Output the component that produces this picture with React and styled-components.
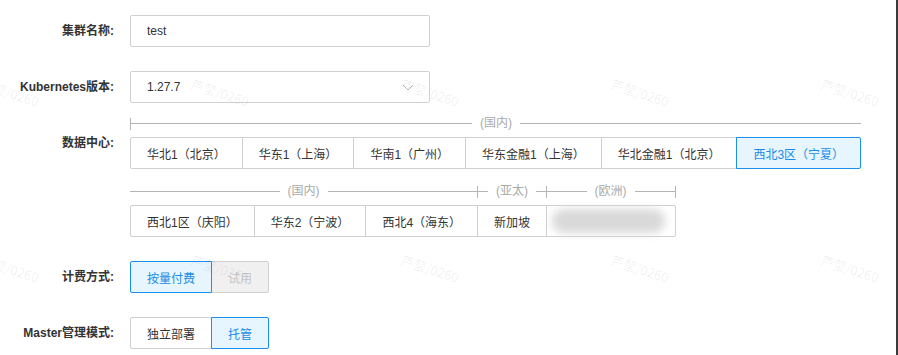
import React from "react";
import styled, { createGlobalStyle } from "styled-components";

const GlobalStyle = createGlobalStyle`
  html, body {
    margin: 0;
    padding: 0;
    background: #fff;
  }
  body {
    font-family: "Liberation Sans", Arial, "Noto Sans CJK SC", sans-serif;
    font-size: 12px;
    color: #333;
  }
`;

const Page = styled.div`
  position: relative;
  width: 898px;
  height: 355px;
  box-sizing: border-box;
  padding-top: 15px;
  border-right: 2px solid #3a3a3a;
  overflow: hidden;
`;

const FormRow = styled.div`
  display: flex;
  align-items: flex-start;
  margin-bottom: ${(p) => p.$gap ?? 24}px;
`;

const Label = styled.div`
  flex: none;
  width: 114px;
  margin-right: 16px;
  padding-top: ${(p) => p.$top || 0}px;
  text-align: right;
  line-height: 32px;
  font-weight: bold;
  color: #333;
  white-space: nowrap;
`;

const TextInput = styled.input`
  width: 300px;
  height: 32px;
  box-sizing: border-box;
  padding: 0 16px;
  border: 1px solid #d0d0d0;
  border-radius: 2px;
  font-family: inherit;
  font-size: 12px;
  color: #333;
  outline: none;
`;

const Select = styled.div`
  display: flex;
  align-items: center;
  justify-content: space-between;
  width: 300px;
  height: 32px;
  box-sizing: border-box;
  padding: 0 15px 0 16px;
  border: 1px solid #d0d0d0;
  border-radius: 2px;
  color: #333;
`;

const Column = styled.div`
  display: flex;
  flex-direction: column;
`;

const Block = styled.div`
  display: flex;
  margin-bottom: ${(p) => p.$gap || 0}px;
`;

const GroupHeader = styled.div`
  display: flex;
  align-items: center;
  height: 13px;
  margin-bottom: 7px;
  color: #aaa;
`;

const Line = styled.span`
  flex: 1;
  height: 1px;
  background: #b4b4b4;
`;

const Tick = styled.span`
  flex: none;
  width: 1px;
  height: 12px;
  background: #b4b4b4;
`;

const HeaderText = styled.span`
  padding: 0 8px;
  line-height: 13px;
  white-space: nowrap;
`;

const SegRow = styled.div`
  display: flex;
`;

const Seg = styled.button`
  position: relative;
  height: 32px;
  padding: ${(p) => (p.$tight ? "0 10px 0 5px" : "0 16px")};
  border: 1px solid #d0d0d0;
  background: ${(p) => (p.$active ? "#e6f5fe" : p.disabled ? "#f0f0f0" : "#fff")};
  border-color: ${(p) => (p.$active ? "#1a90ec" : "#d0d0d0")};
  color: ${(p) => (p.$active ? "#1a8ce6" : p.disabled ? "#c6c6c6" : "#333")};
  z-index: ${(p) => (p.$active ? 1 : 0)};
  font-family: inherit;
  font-size: 12px;
  white-space: nowrap;
  border-radius: 0;
  cursor: ${(p) => (p.disabled ? "not-allowed" : "pointer")};

  & + & {
    margin-left: -1px;
  }
`;

const Group = styled.div`
  display: flex;
  flex-direction: column;

  & + & {
    margin-left: -1px;
  }
  &:first-child ${Seg}:first-child {
    border-radius: 2px 0 0 2px;
  }
  &:last-child ${Seg}:last-child {
    border-top-right-radius: 2px;
    border-bottom-right-radius: 2px;
  }
`;

const Redacted = styled.span`
  display: block;
  width: 113px;
  height: 24px;
  border-radius: 12px;
  background: #d9d9d9;
  filter: blur(4px);
`;

const Watermarks = styled.div`
  position: absolute;
  inset: 0;
  pointer-events: none;
  z-index: 5;
`;

const Mark = styled.span`
  position: absolute;
  width: 70px;
  text-align: center;
  transform: rotate(18deg);
  font-family: "Noto Sans CJK SC", sans-serif;
  font-size: 13px;
  color: rgba(0, 0, 0, 0.07);
  white-space: nowrap;
`;

const Chevron = () => (
  <svg width="12" height="7" viewBox="0 0 12 7" fill="none">
    <path d="M1 1l5 5 5-5" stroke="#b8b8b8" strokeWidth="1" />
  </svg>
);

const regionBlocks = [
  [
    {
      title: "(国内)",
      left: true,
      items: [
        "华北1（北京）",
        "华东1（上海）",
        "华南1（广州）",
        "华东金融1（上海）",
        "华北金融1（北京）",
        "西北3区（宁夏）",
      ],
    },
  ],
  [
    {
      title: "(国内)",
      right: true,
      items: ["西北1区（庆阳）", "华东2（宁波）", "西北4（海东）"],
    },
    { title: "(亚太)", left: true, right: true, items: ["新加坡"] },
    { title: "(欧洲)", right: true, items: [null] },
  ],
];

const markSpots = [];
[92, 268].forEach((cy) =>
  [10, 220, 430, 640, 850].forEach((cx) => markSpots.push([cx - 35, cy - 9]))
);

export default function App() {
  const selectedRegion = "西北3区（宁夏）";
  return (
    <>
      <GlobalStyle />
      <Page>
        <FormRow>
          <Label>集群名称:</Label>
          <TextInput defaultValue="test" />
        </FormRow>

        <FormRow $gap={14}>
          <Label>Kubernetes版本:</Label>
          <Select>
            <span>1.27.7</span>
            <Chevron />
          </Select>
        </FormRow>

        <FormRow>
          <Label $top={10}>数据中心:</Label>
          <Column>
            {regionBlocks.map((groups, bi) => (
              <Block key={bi} $gap={bi === 0 ? 16 : 0}>
                {groups.map((g, gi) => (
                  <Group key={gi}>
                    <GroupHeader>
                      {g.left && <Tick />}
                      <Line />
                      <HeaderText>{g.title}</HeaderText>
                      <Line />
                      {g.right && <Tick />}
                    </GroupHeader>
                    <SegRow>
                      {g.items.map((name, i) =>
                        name ? (
                          <Seg key={i} $active={name === selectedRegion}>
                            {name}
                          </Seg>
                        ) : (
                          <Seg key={i} $tight>
                            <Redacted />
                          </Seg>
                        )
                      )}
                    </SegRow>
                  </Group>
                ))}
              </Block>
            ))}
          </Column>
        </FormRow>

        <FormRow>
          <Label>计费方式:</Label>
          <Block>
            <Group>
              <SegRow>
                <Seg $active>按量付费</Seg>
                <Seg disabled>试用</Seg>
              </SegRow>
            </Group>
          </Block>
        </FormRow>

        <FormRow>
          <Label>Master管理模式:</Label>
          <Block>
            <Group>
              <SegRow>
                <Seg>独立部署</Seg>
                <Seg $active>托管</Seg>
              </SegRow>
            </Group>
          </Block>
        </FormRow>

        <Watermarks>
          {markSpots.map(([x, y], i) => (
            <Mark key={i} style={{ left: x, top: y }}>
              芦莹/0260
            </Mark>
          ))}
        </Watermarks>
      </Page>
    </>
  );
}
